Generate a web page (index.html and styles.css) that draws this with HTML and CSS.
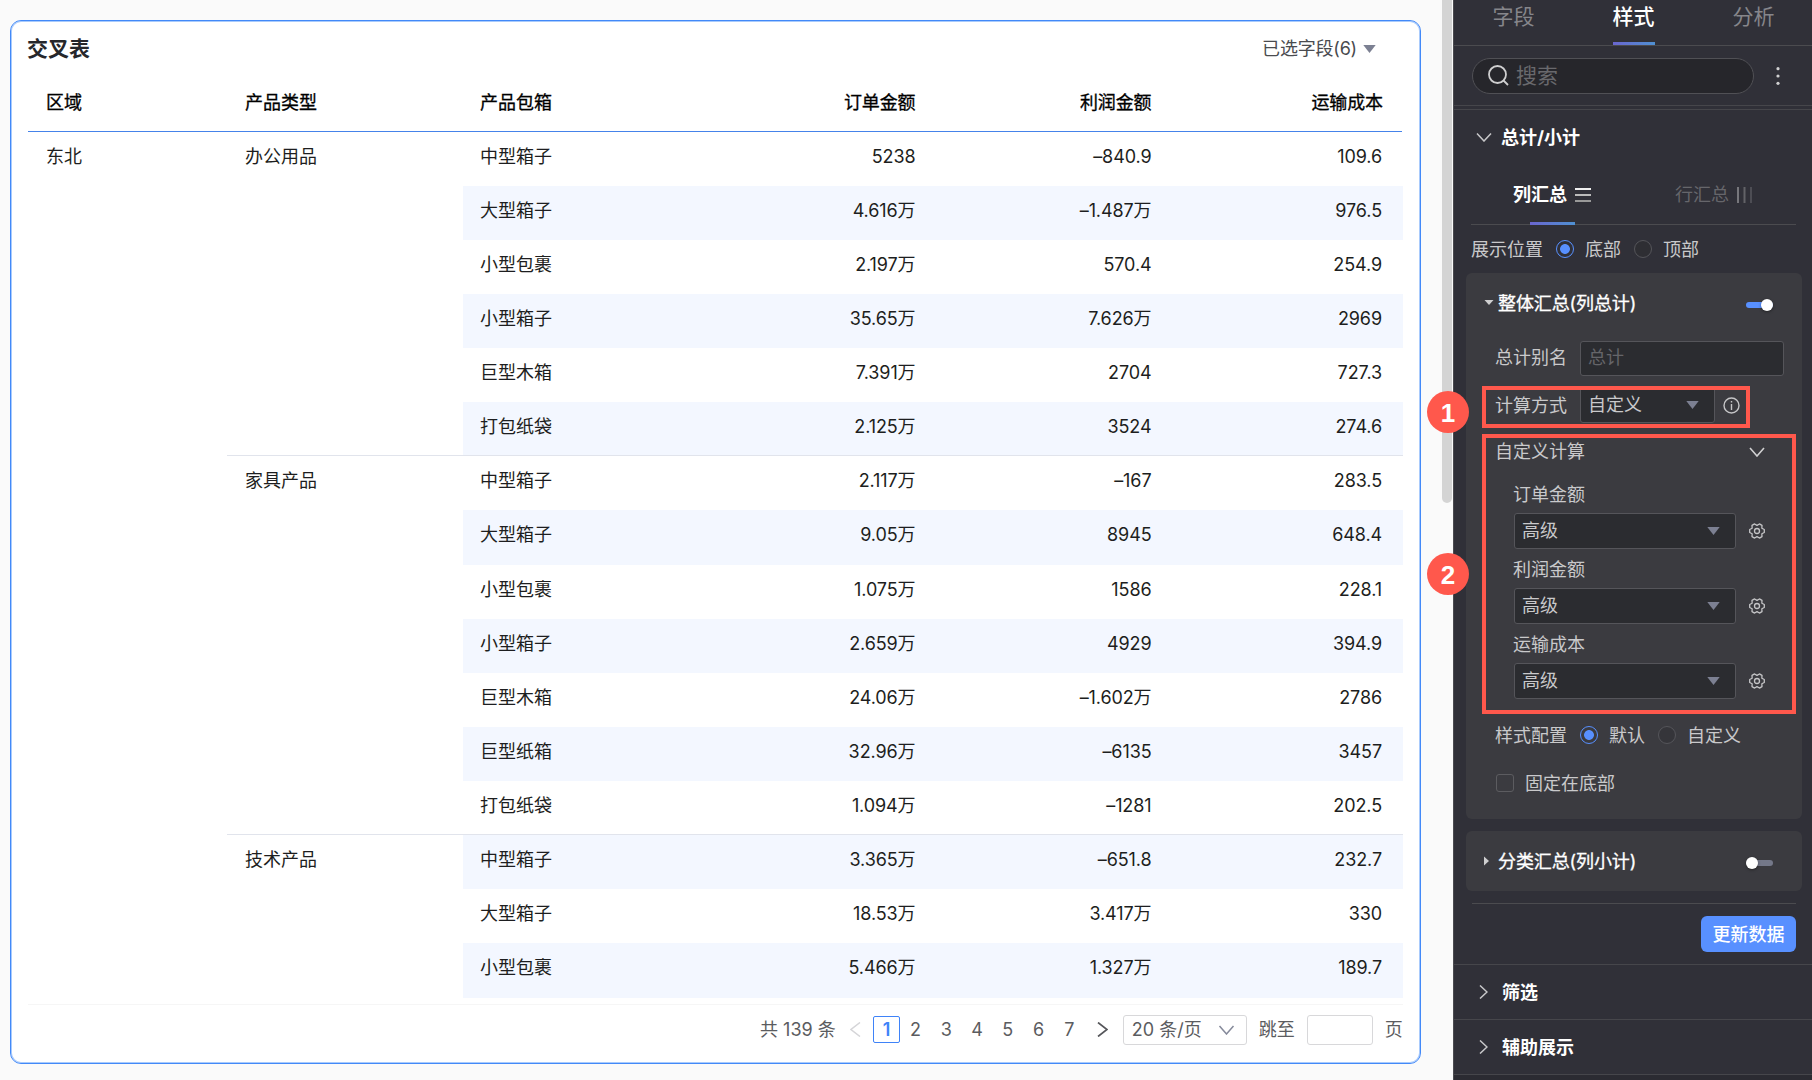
FILE: index.html
```html
<!DOCTYPE html>
<html lang="zh-CN">
<head>
<meta charset="utf-8">
<title>交叉表</title>
<link rel="stylesheet" href="styles.css">
</head>
<body>
<svg class="defs" width="0" height="0">
  <symbol id="gear" viewBox="0 0 16 16"><path stroke-linejoin="round" d="M15.300 6.500v3l-2.450 1.300.15 2.860-2.600 1.400L8 13.600l-2.400 1.460L3 13.660l.15-2.860L.7 9.500v-3l2.450-1.300L3 2.340 5.600.94 8 2.400 10.400.94l2.600 1.400-.15 2.860z"/><circle cx="8" cy="8" r="2.500"/></symbol>
  <symbol id="caret" viewBox="0 0 13 8"><path d="M.3 0h12.400L6.500 8z"/></symbol>
  <symbol id="right" viewBox="0 0 9 14"><path d="M1 .5 8 7l-7 6.500"/></symbol>
  <symbol id="down" viewBox="0 0 16 10"><path d="m1 1 7 8 7-8"/></symbol>
</svg>
<div class="app">
  <main class="canvas">
    <section class="card">
      <header class="card-head">
        <h1>交叉表</h1>
        <div class="picked">已选字段(6)<svg class="caret" width="13" height="8"><use href="#caret"/></svg></div>
      </header>
      <div class="table">
        <div class="row head"><span>区域</span><span>产品类型</span><span>产品包箱</span><span class="n">订单金额</span><span class="n">利润金额</span><span class="n">运输成本</span></div>
        <div class="row"><span>东北</span><span>办公用品</span><span>中型箱子</span><span class="n">5238</span><span class="n">–840.9</span><span class="n">109.6</span></div>
        <div class="row alt"><span></span><span></span><span>大型箱子</span><span class="n">4.616万</span><span class="n">–1.487万</span><span class="n">976.5</span></div>
        <div class="row"><span></span><span></span><span>小型包裹</span><span class="n">2.197万</span><span class="n">570.4</span><span class="n">254.9</span></div>
        <div class="row alt"><span></span><span></span><span>小型箱子</span><span class="n">35.65万</span><span class="n">7.626万</span><span class="n">2969</span></div>
        <div class="row"><span></span><span></span><span>巨型木箱</span><span class="n">7.391万</span><span class="n">2704</span><span class="n">727.3</span></div>
        <div class="row alt"><span></span><span></span><span>打包纸袋</span><span class="n">2.125万</span><span class="n">3524</span><span class="n">274.6</span></div>
        <div class="rule"></div>
        <div class="row"><span></span><span>家具产品</span><span>中型箱子</span><span class="n">2.117万</span><span class="n">–167</span><span class="n">283.5</span></div>
        <div class="row alt tall"><span></span><span></span><span>大型箱子</span><span class="n">9.05万</span><span class="n">8945</span><span class="n">648.4</span></div>
        <div class="row"><span></span><span></span><span>小型包裹</span><span class="n">1.075万</span><span class="n">1586</span><span class="n">228.1</span></div>
        <div class="row alt"><span></span><span></span><span>小型箱子</span><span class="n">2.659万</span><span class="n">4929</span><span class="n">394.9</span></div>
        <div class="row"><span></span><span></span><span>巨型木箱</span><span class="n">24.06万</span><span class="n">–1.602万</span><span class="n">2786</span></div>
        <div class="row alt"><span></span><span></span><span>巨型纸箱</span><span class="n">32.96万</span><span class="n">–6135</span><span class="n">3457</span></div>
        <div class="row"><span></span><span></span><span>打包纸袋</span><span class="n">1.094万</span><span class="n">–1281</span><span class="n">202.5</span></div>
        <div class="rule"></div>
        <div class="row alt"><span></span><span>技术产品</span><span>中型箱子</span><span class="n">3.365万</span><span class="n">–651.8</span><span class="n">232.7</span></div>
        <div class="row"><span></span><span></span><span>大型箱子</span><span class="n">18.53万</span><span class="n">3.417万</span><span class="n">330</span></div>
        <div class="row alt tall"><span></span><span></span><span>小型包裹</span><span class="n">5.466万</span><span class="n">1.327万</span><span class="n">189.7</span></div>
      </div>
      <footer class="pager">
        <span class="total">共 139 条</span>
        <svg class="prev" width="11" height="15" viewBox="0 0 11 15"><path d="M10 .5 1 7.500l9 7"/></svg>
        <span class="page on">1</span><span class="page">2</span><span class="page">3</span><span class="page">4</span><span class="page">5</span><span class="page">6</span><span class="page">7</span>
        <svg class="next" width="11" height="15" viewBox="0 0 11 15"><path d="m1 .5 9 7-9 7"/></svg>
        <span class="size">20 条/页<svg width="17" height="10"><use href="#down"/></svg></span>
        <span class="jump">跳至</span><span class="jump-box"></span><span>页</span>
      </footer>
    </section>
    <div class="thumb"></div>
  </main>

  <aside class="panel">
    <nav class="tabs"><span>字段</span><span class="on">样式</span><span>分析</span></nav>
    <div class="searchbar">
      <div class="search"><svg width="21" height="21" viewBox="0 0 21 21"><circle cx="9.500" cy="9.500" r="8.500"/><path d="m15.500 15.500 4.500 4.500"/></svg>搜索</div>
      <svg class="dots" width="4" height="18" viewBox="0 0 4 18"><circle cx="2" cy="1.700" r="1.600"/><circle cx="2" cy="9" r="1.600"/><circle cx="2" cy="16.300" r="1.600"/></svg>
    </div>
    <div class="section first"><svg class="fold" width="16" height="9" viewBox="0 0 16 9"><path d="m1 .5 7 7.500 7-7.500"/></svg>总计/小计</div>
    <div class="subtabs">
      <span class="on">列汇总<svg width="16" height="14" viewBox="0 0 16 14"><path d="M0 1h16" stroke="#eee"/><path d="M0 7h16" stroke="#bbb"/><path d="M0 13h16" stroke="#999"/></svg></span>
      <span>行汇总<svg width="15" height="16" viewBox="0 0 15 16"><path d="M1 0v16" stroke="#77777c"/><path d="M7.500 0v16" stroke="#626267"/><path d="M14 0v16" stroke="#4d4d54"/></svg></span>
    </div>
    <div class="radios position"><span class="label">展示位置</span><i class="radio on"></i><span>底部</span><i class="radio"></i><span>顶部</span></div>

    <div class="group main-group">
      <div class="group-head"><svg width="10" height="5" viewBox="0 0 10 5"><path d="M.5 0h9L5 5z"/></svg><span>整体汇总(列总计)</span><i class="switch on"></i></div>
      <div class="field alias"><span>总计别名</span><div class="input">总计</div></div>
      <div class="field method"><span>计算方式</span><div class="select">自定义<svg class="caret" width="13" height="8"><use href="#caret"/></svg></div>
        <svg class="info" width="17" height="17" viewBox="0 0 17 17"><circle cx="8.500" cy="8.500" r="7.500"/><path d="M8.500 7v6M8.500 4v1.500"/></svg></div>
      <div class="custom-head">自定义计算<svg width="16" height="10"><use href="#down"/></svg></div>
      <div class="measure"><span>订单金额</span><div class="line"><div class="select">高级<svg class="caret" width="13" height="8"><use href="#caret"/></svg></div><svg class="gear" width="16" height="16"><use href="#gear"/></svg></div></div>
      <div class="measure"><span>利润金额</span><div class="line"><div class="select">高级<svg class="caret" width="13" height="8"><use href="#caret"/></svg></div><svg class="gear" width="16" height="16"><use href="#gear"/></svg></div></div>
      <div class="measure"><span>运输成本</span><div class="line"><div class="select">高级<svg class="caret" width="13" height="8"><use href="#caret"/></svg></div><svg class="gear" width="16" height="16"><use href="#gear"/></svg></div></div>
      <div class="radios style-row"><span class="label">样式配置</span><i class="radio on"></i><span>默认</span><i class="radio"></i><span>自定义</span></div>
      <div class="check-row"><i class="check"></i><span>固定在底部</span></div>
      <div class="callout one"></div>
      <div class="callout two"></div>
    </div>
    <div class="group sub-group">
      <div class="group-head"><svg width="5" height="10" viewBox="0 0 5 10"><path d="M0 .5v9L5 5z"/></svg><span>分类汇总(列小计)</span><i class="switch"></i></div>
    </div>
    <div class="actions"><button>更新数据</button></div>
    <div class="section"><svg class="fold" width="9" height="14"><use href="#right"/></svg><span>筛选</span></div>
    <div class="section"><svg class="fold" width="9" height="14"><use href="#right"/></svg><span>辅助展示</span></div>
    <div class="end"></div>
  </aside>
  <div class="badge b1">1</div>
  <div class="badge b2">2</div>
</div>
</body>
</html>
```
FILE: styles.css
```css
* { box-sizing: border-box; }
body {
  margin: 0;
  font: 18px/26px Inter, "Noto Sans CJK SC", sans-serif;
  color: #1d1e20;
  background: #fafafa;
}
.defs { position: absolute; }
svg { display: block; flex: none; fill: none; }
.app { position: relative; display: flex; width: 1812px; height: 1080px; overflow: hidden; }

/* report canvas */
.canvas { display: flex; width: 1453px; padding: 20px 0 0 10px; }
.card {
  display: flex;
  flex-direction: column;
  width: 1411px;
  height: 1044px;
  padding: 0 17px;
  background: #fff;
  border: 1px solid #4289f8;
  border-radius: 11px;
  box-shadow: inset 0 0 0 1px #a9cbfc;
}
.card-head { display: flex; align-items: center; justify-content: space-between; height: 55px; padding-right: 27px; }
h1 { margin: 0 0 0 -1px; font-size: 21px; font-weight: 700; color: #26272b; }
.picked { display: flex; align-items: center; gap: 6px; color: #4a4b4f; letter-spacing: -0.2px; }
.caret { fill: #7c8092; }
.thumb { width: 10px; height: 503px; margin: -20px 0 0 21px; background: #d4d4d4; border-radius: 0 0 5px 5px; }

.table { width: 1375px; }
.row { display: grid; grid-template-columns: 199px 236px 236px 236px 236px 232px; height: 54px; }
.row.tall { height: 55px; }
.row span { padding: 12px 20px 0 18px; white-space: nowrap; }
.row span:nth-child(3) { padding-left: 17px; }
.row .n { text-align: right; letter-spacing: -0.1px; padding-right: 19.500px; }
.row .n:last-child { padding-right: 21px; }
.row.alt span:nth-child(n+3) { background: #f3f7ff; }
.row.head { height: 56px; color: #000; -webkit-text-stroke: 0.300px #000; border-bottom: 1px solid #4583ea; margin-right: 1px; }
.row.head span { padding-top: 14px; }
.row.head span:last-child { padding-right: 20px; }
.rule { position: relative; height: 1px; margin: -1px 0 0 199px; background: #e1e4ec; }

.pager {
  display: flex;
  align-items: center;
  height: 50px;
  margin-top: 6px;
  width: 1375px;
  border-top: 1px solid #f6f6f6;
  color: #5b5c60;
  white-space: nowrap;
  padding-left: 732px;
}
.total { width: 90px; }
.prev { stroke: #d5d5d8; stroke-width: 1.5; margin-right: 12px; }
.next { stroke: #55565a; stroke-width: 1.7; margin: 0 15px 0 12px; }
.page { width: 30.800px; text-align: center; }
.page.on { width: 27px; height: 27px; line-height: 25px; border: 1px solid #3f83f8; border-radius: 2px; color: #3f83f8; font-weight: 600; }
.size { display: flex; align-items: center; justify-content: space-between; width: 124px; height: 30px; padding: 0 11px 0 8px; border: 1px solid #d8d8da; border-radius: 3px; }
.size svg { stroke: #85899a; stroke-width: 1.5; }
.jump { margin: 0 12px; }
.jump-box { width: 66px; height: 30px; margin-right: 12px; border: 1px solid #d8d8da; border-radius: 3px; }

/* settings panel */
.panel { width: 359px; background: #303038; color: #c9c9cb; border-left: 1px solid #4b4b50; }
.tabs { display: flex; justify-content: center; gap: 78px; height: 46px; font-size: 21px; line-height: 34px; color: #86868b; border-bottom: 1px solid #4b4b4f; padding-left: 1px; }
.tabs .on { color: #fff; font-weight: 500; }
.tabs .on, .subtabs .on { background: linear-gradient(90deg, #6a66cf, #4f90d2) bottom / 100% 3px no-repeat; }
.searchbar { display: flex; align-items: center; height: 60px; padding-left: 18px; border-bottom: 1px solid #46464b; }
.search { display: flex; align-items: center; gap: 7px; width: 282px; height: 36px; padding-left: 15px; border: 1px solid #505055; border-radius: 18px; background: #26262b; color: #69696d; font-size: 21px; }
.search svg { stroke: #cfcfd0; stroke-width: 1.8; }
.dots { fill: #d0d0d1; margin-left: 22px; }
.section { display: flex; align-items: center; height: 55px; padding-left: 25px; border-top: 1px solid #46464b; color: #fff; font-weight: 700; }
.section span { padding-top: 2px; }
.section.first { height: 56px; margin: 3px 0 2px; padding-left: 22px; }
.fold { stroke: #c8c8ca; stroke-width: 1.5; margin-right: 14px; }
.section.first .fold { margin-right: 9px; }
.subtabs { display: flex; height: 58px; margin: 0 16px 0 17px; padding-left: 42px; border-bottom: 1px solid #4b4b4f; color: #66666b; }
.subtabs span { display: flex; align-items: center; gap: 8px; height: 58px; padding-bottom: 3px; margin-right: 84px; }
.subtabs span:last-child { margin: 0; }
.subtabs svg { stroke-width: 2; }
.subtabs .on { color: #fff; font-weight: 700; background-size: 45px 3px; }
.radios { display: flex; align-items: center; }
.radios > span, .check-row span, .field > span { padding-top: 2px; }
.position { height: 48px; padding-left: 17px; }
.label { width: 85px; }
.radio { width: 18px; height: 18px; margin-right: 11px; border: 1px solid #55555a; border-radius: 50%; background: #2e2e33; }
.main-group .radio { background: #35353a; }
span + .radio { margin-left: 13px; }
.label + .radio { margin-left: 0; }
.radios .radio.on { border-color: #5890ff; background: radial-gradient(circle, #5890ff 4.500px, transparent 5.300px); }
.group { position: relative; width: 336px; margin-left: 12px; background: #3b3b40; border-radius: 6px; }
.main-group { height: 546px; }
.group-head { display: flex; align-items: center; height: 62px; padding: 0 29px 0 18px; color: #fff; -webkit-text-stroke: 0.300px #fff; letter-spacing: -0.1px; }
.group-head svg { fill: #cfcfd0; margin: -4px 4px 0 0; }
.sub-group .group-head svg { margin: 0 9px 0 0; }
.sub-group .group-head span { padding-top: 2px; }
.switch { position: relative; width: 27px; height: 6px; margin: 2px 0 0 auto; border-radius: 3px; background: #747889; }
.switch::after { content: ""; position: absolute; left: 0; top: -3px; width: 12px; height: 12px; border-radius: 50%; background: #fff; box-shadow: 0 1px 3px #0006; }
.switch.on { background: #5890ff; }
.sub-group .switch { margin-top: 4px; }
.switch.on::after { left: 15px; }
.field { display: flex; align-items: center; padding-left: 29px; }
.field > span { width: 85px; }
.field.alias > span { padding-top: 0; }
.alias { height: 46px; }
.input, .select { display: flex; align-items: center; height: 35px; padding: 0 7px; background: #2b2c30; border: 1px solid #55555a; border-radius: 3px; }
.input { width: 204px; color: #656569; }
.select { justify-content: space-between; height: 36px; width: 222px; padding: 0 15px 0 7px; }
.method { height: 48px; }
.method .select { width: 135px; }
.info { margin-left: 8px; stroke: #c5c5c7; stroke-width: 1.4; }
.custom-head { display: flex; align-items: center; justify-content: space-between; height: 46px; padding: 0 37px 0 29px; }
.custom-head svg { stroke: #d0d0d1; stroke-width: 1.6; }
.measure { height: 75px; padding-left: 48px; }
.measure > span { display: block; height: 38px; margin-left: -1px; line-height: 39px; }
.line { display: flex; align-items: center; gap: 13px; }
.gear { stroke: #c5c5c7; stroke-width: 1.3; }
.style-row { height: 46px; margin-top: 12px; padding-left: 29px; }
.check-row { display: flex; align-items: center; gap: 11px; height: 49px; padding-left: 30px; }
.check { width: 18px; height: 18px; border: 1px solid #5c5c60; border-radius: 3px; }
.sub-group { margin-top: 12px; height: 60px; }
.sub-group .group-head { height: 60px; }
.actions { display: flex; justify-content: flex-end; height: 61px; margin: 12px 16px 0 18px; padding-top: 12px; border-top: 1px solid #4b4b4f; }
button { width: 95px; height: 36px; padding: 2px 0 0; border: 0; border-radius: 6px; background: #5890ff; color: #fff; font: inherit; font-weight: 500; }
.end { height: 8px; border-top: 1px solid #46464b; background: #2b2b32; }

/* annotations drawn over the panel */
.callout { position: absolute; border: 4px solid #ff584c; }
.callout.one { left: 16px; top: 113px; width: 268px; height: 42px; }
.callout.two { left: 16px; top: 161px; width: 314px; height: 280px; }
.badge { position: absolute; left: 1427px; width: 42px; height: 42px; border-radius: 50%; background: #ff584c; color: #fff; font: 700 26px/44px "Liberation Sans", sans-serif; text-align: center; }
.b1 { top: 391px; }
.b2 { top: 553px; }
```
